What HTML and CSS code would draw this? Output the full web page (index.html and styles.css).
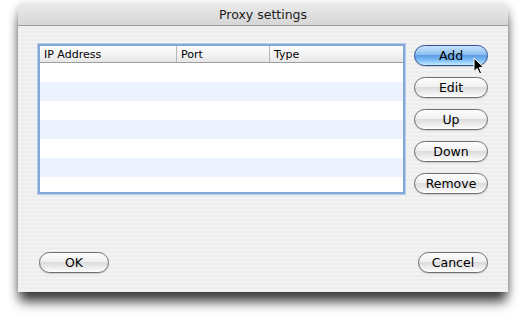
FILE: index.html
```html
<!DOCTYPE html>
<html>
<head>
<meta charset="utf-8">
<link rel="stylesheet" href="styles.css">
</head>
<body>
<div class="window">
  <div class="titlebar">Proxy settings</div>
  <div class="content">
    <div class="main">
      <div class="table">
        <div class="thead">
          <div class="th c1">IP Address</div>
          <div class="th c2">Port</div>
          <div class="th c3">Type</div>
        </div>
        <div class="tbody">
          <div class="row"></div>
          <div class="row alt"></div>
          <div class="row"></div>
          <div class="row alt"></div>
          <div class="row"></div>
          <div class="row alt"></div>
          <div class="row"></div>
        </div>
      </div>
      <div class="buttons">
        <div class="btn default">Add
          <svg class="cursor" width="12" height="18" viewBox="0 0 12 18"><path d="M1 1 L1 14.5 L4.2 11.4 L6.6 16.8 L8.6 15.9 L6.3 10.6 L10.8 10.6 Z" fill="#000" stroke="#fff" stroke-width="1" stroke-linejoin="round"/></svg>
        </div>
        <div class="btn">Edit</div>
        <div class="btn">Up</div>
        <div class="btn">Down</div>
        <div class="btn">Remove</div>
      </div>
    </div>
    <div class="footer">
      <div class="btn small">OK</div>
      <div class="btn small">Cancel</div>
    </div>
  </div>
</div>
</body>
</html>
```

FILE: styles.css
```css
html, body {
  margin: 0;
  padding: 0;
  background: #fff;
}
body {
  padding: 3px 0 0 18px;
  height: 317px;
  box-sizing: border-box;
  font-family: "DejaVu Sans", "Liberation Sans", sans-serif;
  color: #000;
}
.window {
  width: 490px;
  height: 289px;
  border-radius: 6px 6px 0 0;
  box-shadow: 0 12px 12px -2px rgba(0,0,0,0.7), 0 3px 10px rgba(0,0,0,0.3);
  background: repeating-linear-gradient(to bottom, #ededed 0, #ededed 2px, #f3f3f3 2px, #f3f3f3 4px);
  display: flex;
  flex-direction: column;
}
.titlebar {
  height: 22px;
  line-height: 23px;
  text-align: center;
  font-size: 12.5px;
  color: #1a1a1a;
  background: linear-gradient(to bottom, #ebebeb, #d6d6d6);
  border-bottom: 1px solid #9a9a9a;
  border-radius: 6px 6px 0 0;
}
.content {
  flex: 1;
  padding: 18px 20px 19px 20px;
  display: flex;
  flex-direction: column;
}
.main {
  display: flex;
  gap: 8px;
}
.table {
  width: 364px;
  height: 146px;
  border: 2px solid #84a8d6;
  box-shadow: 0 0 0 1px #b8cde9;
  margin: 0 1px 1px 0;
  display: flex;
  flex-direction: column;
  background: #fff;
}
.thead {
  display: flex;
  height: 16px;
  border-bottom: 1px solid #9e9e9e;
  background: linear-gradient(to bottom, #ffffff, #f1f1f1 60%, #e6e6e6);
  font-size: 11px;
  line-height: 17px;
}
.th {
  padding-left: 4px;
  box-sizing: border-box;
  border-right: 1px solid #b8b8b8;
}
.c1 { width: 137px; }
.c2 { width: 93px; }
.c3 { flex: 1; border-right: none; }
.tbody {
  flex: 1;
  overflow: hidden;
}
.row {
  height: 19px;
  background: #fff;
}
.row.alt {
  background: #edf3fe;
}
.buttons {
  display: flex;
  flex-direction: column;
  gap: 11px;
  margin-top: 1px;
}
.btn {
  position: relative;
  width: 72px;
  height: 19px;
  border: 1px solid #6e6e6e;
  border-radius: 11px;
  text-align: center;
  font-size: 12.5px;
  line-height: 20px;
  background: linear-gradient(to bottom, #fdfdfd 0%, #f0f0f0 45%, #dcdcdc 50%, #ececec 75%, #ffffff 100%);
  box-shadow: 0 1px 1px rgba(0,0,0,0.15);
}
.btn.small {
  width: 68px;
}
.btn.default {
  border-color: #2f4f95;
  background: linear-gradient(to bottom, #c8e2fb 0%, #8dc0f0 45%, #5c9ee6 50%, #7fbdf4 75%, #c4ecff 100%);
}
.cursor {
  position: absolute;
  left: 58px;
  top: 11px;
}
.footer {
  margin-top: auto;
  padding: 0 0 0 1px;
  display: flex;
  justify-content: space-between;
}
```
